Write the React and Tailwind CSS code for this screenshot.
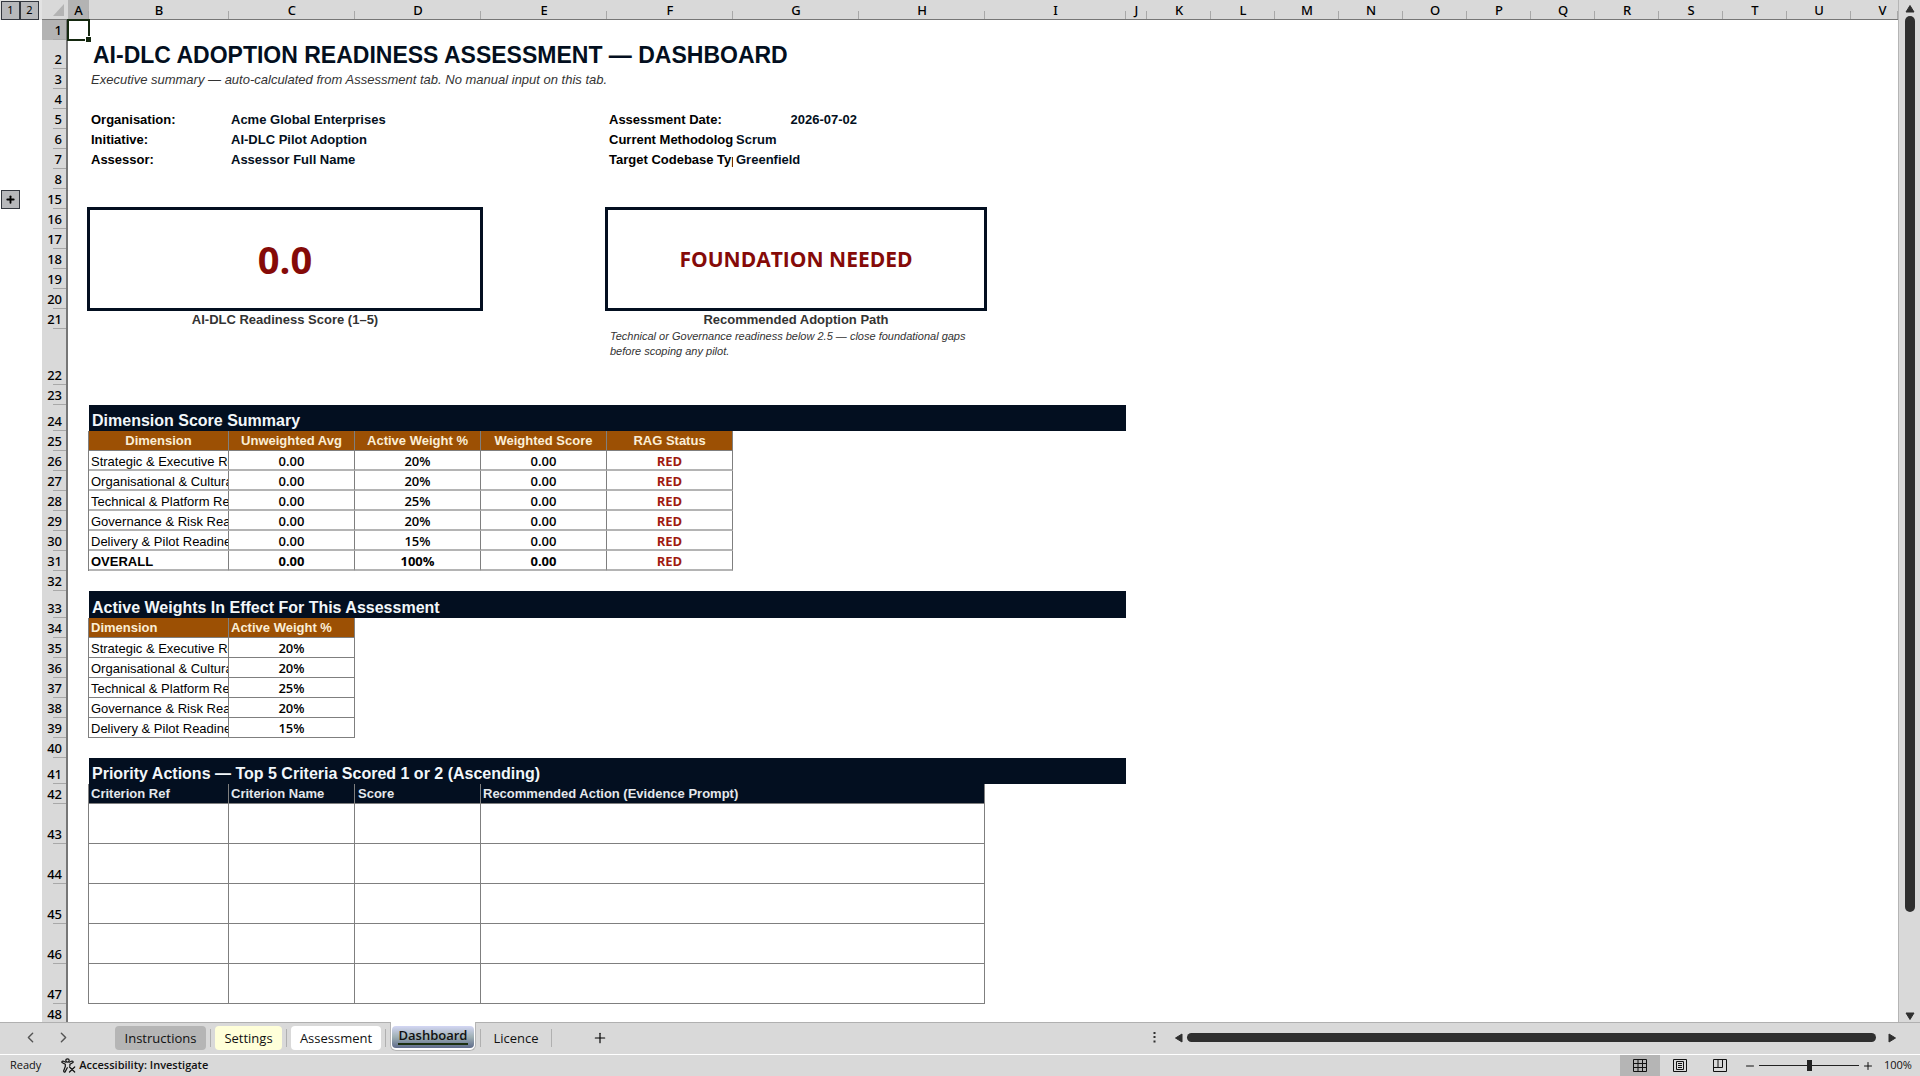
import React, { useState } from "react";
import { ChevronLeft, ChevronRight, Plus, Minus } from "lucide-react";

const COLUMNS = [
  { name: "A", width: "w-[21px]" },
  { name: "B", width: "w-[140px]" },
  { name: "C", width: "w-[126px]" },
  { name: "D", width: "w-[126px]" },
  { name: "E", width: "w-[126px]" },
  { name: "F", width: "w-[126px]" },
  { name: "G", width: "w-[126px]" },
  { name: "H", width: "w-[126px]" },
  { name: "I", width: "w-[141px]" },
  { name: "J", width: "w-[21px]" },
  { name: "K", width: "w-16" },
  { name: "L", width: "w-16" },
  { name: "M", width: "w-16" },
  { name: "N", width: "w-16" },
  { name: "O", width: "w-16" },
  { name: "P", width: "w-16" },
  { name: "Q", width: "w-16" },
  { name: "R", width: "w-16" },
  { name: "S", width: "w-16" },
  { name: "T", width: "w-16" },
  { name: "U", width: "w-16" },
  { name: "V", width: "" },
];

const DIMENSIONS = [
  { name: "Strategic & Executive Readiness", weight: "20%" },
  { name: "Organisational & Cultural Readiness", weight: "20%" },
  { name: "Technical & Platform Readiness", weight: "25%" },
  { name: "Governance & Risk Readiness", weight: "20%" },
  { name: "Delivery & Pilot Readiness", weight: "15%" },
];

const DETAILS = [
  ["Organisation:", "Acme Global Enterprises", "Assessment Date:", "2026-07-02"],
  ["Initiative:", "AI-DLC Pilot Adoption", "Current Methodology:", "Scrum"],
  ["Assessor:", "Assessor Full Name", "Target Codebase Type:", "Greenfield"],
];

const TABS = [
  { name: "Instructions", style: "w-[91px] bg-[#b5b5b5]" },
  { name: "Settings", style: "w-[67px] bg-[#ffffd9]" },
  { name: "Assessment", style: "w-[90px] bg-white" },
  { name: "Dashboard", style: "w-[86px]" },
  { name: "Licence", style: "w-[62px]" },
];

const Row = ({ n, height = "h-5", selected, gutter, children }) => (
  <tr className={height}>
    <td className="bg-white p-0">{gutter}</td>
    <th
      scope="row"
      className={`border-r-2 border-[#767676] p-0 pr-1 text-right align-bottom font-['Noto_Sans',sans-serif] text-[13px] font-medium leading-5 bg-[linear-gradient(#a8a8a8,#a8a8a8)] bg-[length:13px_1px] bg-right-bottom bg-no-repeat ${
        selected ? "bg-[#b3b3b3]" : "bg-[#d9d9d9]"
      }`}
    >
      {n}
    </th>
    {children || <td colSpan={22} />}
  </tr>
);

const SectionRow = ({ n, height, title }) => (
  <Row n={n} height={height}>
    <td />
    <td
      colSpan={8}
      className="bg-[#030f20] p-0 pl-[3px] align-bottom text-[16px] font-bold leading-5 text-[#f2f7fa]"
    >
      {title}
    </td>
  </Row>
);

const HeadCell = ({ children, className = "", ...rest }) => (
  <th
    scope="col"
    className={`border-b border-r border-[#7f7f7f] p-0 text-[13px] leading-[18px] ${className}`}
    {...rest}
  >
    {children}
  </th>
);

const Cell = ({ children, thick, className = "", ...rest }) => (
  <td
    className={`overflow-hidden whitespace-nowrap border-r border-r-[#7f7f7f] p-0 align-bottom ${
      thick
        ? "border-b-2 border-b-[#b4b4b4] leading-[15px]"
        : "border-b border-b-[#7f7f7f] leading-[17px]"
    } ${className}`}
    {...rest}
  >
    {children}
  </td>
);

// numbers and status use a different face from the labels
const ValueCell = ({ children, className = "font-semibold", thick }) => (
  <Cell thick={thick} className={`text-center font-['Open_Sans',sans-serif] ${className}`}>
    {children}
  </Cell>
);

const OutlineButton = ({ label, children }) => (
  <button
    aria-label={label}
    className="flex h-[19px] w-[19px] items-center justify-center border border-[#33373f] bg-[#b7b8bb] font-['Noto_Sans',sans-serif] text-[11px] leading-4"
  >
    {children}
  </button>
);

const Sheet = () => (
  <table className="w-full table-fixed border-separate border-spacing-0 text-[13px] text-black">
    <colgroup>
      <col className="w-[42px]" />
      <col className="w-[26px]" />
      {COLUMNS.map((column) => (
        <col key={column.name} className={column.width} />
      ))}
    </colgroup>
    <thead>
      <tr className="h-5">
        <td className="bg-[#e3e3e3] p-0 pl-px">
          <div className="flex">
            <OutlineButton label="Outline level 1">1</OutlineButton>
            <OutlineButton label="Outline level 2">2</OutlineButton>
          </div>
        </td>
        <td className="border-b border-[#767676] bg-[#d9d9d9] p-0">
          <svg viewBox="0 0 25 19" className="block h-[19px] w-[25px]">
            <path d="M22 4v12H11z" fill="#b3b3b3" />
          </svg>
        </td>
        {COLUMNS.map((column) => (
          <th
            key={column.name}
            scope="col"
            className={`overflow-hidden border-b border-[#767676] p-0 pt-px text-center font-['Noto_Sans',sans-serif] text-[13px] font-medium leading-[18px] bg-[linear-gradient(#a8a8a8,#a8a8a8)] bg-[length:1px_8px] bg-right-bottom bg-no-repeat ${
              column.name === "A" ? "bg-[#b3b3b3]" : "bg-[#d9d9d9]"
            } ${column.name === "V" ? "pl-4" : ""}`}
          >
            {column.name}
          </th>
        ))}
      </tr>
    </thead>
    <tbody>
      <Row n={1} selected>
        <td className="relative p-0 outline-2 -outline-offset-1 outline-[#14280f]">
          <span className="absolute -bottom-0.5 -right-0.5 size-[6px] border-l border-t border-white bg-[#14280f]" />
        </td>
        <td colSpan={21} />
      </Row>
      <Row n={2} height="h-[29px]">
        <td />
        <td
          colSpan={10}
          className="p-0 pl-1 pt-0.5 text-[23px] font-bold leading-[27px] text-[#030f20]"
        >
          AI-DLC ADOPTION READINESS ASSESSMENT — DASHBOARD
        </td>
      </Row>
      <Row n={3}>
        <td />
        <td colSpan={10} className="p-0 pl-0.5 pt-0.5 italic leading-[18px] text-[#333333]">
          Executive summary — auto-calculated from Assessment tab. No manual input on this tab.
        </td>
      </Row>
      <Row n={4} />
      {DETAILS.map(([label, value, label2, value2], i) => (
        <Row key={label} n={5 + i}>
          <td />
          <td className="p-0 pl-0.5 pt-0.5 font-bold leading-[18px]">{label}</td>
          <td colSpan={3} className="p-0 pl-0.5 pt-0.5 font-bold leading-[18px] text-[#030f20]">
            {value}
          </td>
          <td className="overflow-hidden whitespace-nowrap p-0 pl-0.5 pt-0.5 font-bold leading-[18px]">
            {label2}
          </td>
          <td
            className={`p-0 pt-0.5 font-bold leading-[18px] text-[#030f20] ${
              i === 0 ? "pr-0.5 text-right" : "pl-[3px]"
            }`}
          >
            {value2}
          </td>
        </Row>
      ))}
      <Row n={8} />
      <Row
        n={15}
        gutter={
          <div className="pl-px">
            <OutlineButton label="Expand rows">
              <Plus size={11} strokeWidth={4} />
            </OutlineButton>
          </div>
        }
      />
      <Row n={16}>
        <td />
        <td
          colSpan={3}
          rowSpan={5}
          className="p-0 text-center font-['Open_Sans',sans-serif] text-[38px] font-bold leading-none text-[#850a08] outline-3 -outline-offset-1 outline-[#030f20]"
        >
          0.0
        </td>
        <td />
        <td
          colSpan={3}
          rowSpan={5}
          className="p-0 text-center font-['Open_Sans',sans-serif] text-[21px] font-bold leading-none text-[#850a08] outline-3 -outline-offset-1 outline-[#030f20]"
        >
          FOUNDATION NEEDED
        </td>
      </Row>
      <Row n={17}><td /></Row>
      <Row n={18}><td /></Row>
      <Row n={19}><td /></Row>
      <Row n={20}><td /></Row>
      <Row n={21}>
        <td />
        <td colSpan={3} className="p-0 pt-0.5 text-center font-bold leading-[18px] text-[#333333]">
          AI-DLC Readiness Score (1–5)
        </td>
        <td />
        <td colSpan={3} className="p-0 pt-0.5 text-center font-bold leading-[18px] text-[#333333]">
          Recommended Adoption Path
        </td>
      </Row>
      <Row n={22} height="h-14">
        <td colSpan={5} />
        <td
          colSpan={3}
          className="p-0 pl-[3px] align-top text-[11px] italic leading-[15px] text-[#333333]"
        >
          Technical or Governance readiness below 2.5 — close foundational gaps before scoping any
          pilot.
        </td>
      </Row>
      <Row n={23} />

      <SectionRow n={24} height="h-[26px]" title="Dimension Score Summary" />
      <Row n={25}>
        <td className="border-r border-[#7f7f7f]" />
        {["Dimension", "Unweighted Avg", "Active Weight %", "Weighted Score", "RAG Status"].map(
          (head) => (
            <HeadCell key={head} className="bg-[#9c5004] text-center text-[#fbeed6]">
              {head}
            </HeadCell>
          )
        )}
      </Row>
      {[...DIMENSIONS, { name: "OVERALL", weight: "100%", total: true }].map((dimension, i) => {
        const weight = dimension.total ? "font-bold" : "font-semibold";
        return (
          <Row key={dimension.name} n={26 + i}>
            <td className="border-r border-[#7f7f7f]" />
            <Cell thick className={`pl-0.5 ${dimension.total ? "font-bold" : ""}`}>
              {dimension.name}
            </Cell>
            <ValueCell thick className={weight}>0.00</ValueCell>
            <ValueCell thick className={weight}>{dimension.weight}</ValueCell>
            <ValueCell thick className={weight}>0.00</ValueCell>
            <ValueCell thick className="font-bold text-[#a01a10]">RED</ValueCell>
          </Row>
        );
      })}
      <Row n={32} />

      <SectionRow n={33} height="h-[27px]" title="Active Weights In Effect For This Assessment" />
      <Row n={34}>
        <td className="border-r border-[#7f7f7f]" />
        <HeadCell className="bg-[#9c5004] pl-0.5 text-left text-[#fbeed6]">Dimension</HeadCell>
        <HeadCell className="bg-[#9c5004] pl-0.5 text-left text-[#fbeed6]">
          Active Weight %
        </HeadCell>
      </Row>
      {DIMENSIONS.map((dimension, i) => (
        <Row key={dimension.name} n={35 + i}>
          <td className="border-r border-[#7f7f7f]" />
          <Cell className="pl-0.5">{dimension.name}</Cell>
          <ValueCell>{dimension.weight}</ValueCell>
        </Row>
      ))}
      <Row n={40} />

      <SectionRow
        n={41}
        height="h-[26px]"
        title="Priority Actions — Top 5 Criteria Scored 1 or 2 (Ascending)"
      />
      <Row n={42}>
        <td className="border-r border-[#7f7f7f]" />
        <HeadCell className="bg-[#030f20] pl-0.5 text-left text-[#e4e8ec]">Criterion Ref</HeadCell>
        <HeadCell className="bg-[#030f20] pl-0.5 text-left text-[#e4e8ec]">Criterion Name</HeadCell>
        <HeadCell className="bg-[#030f20] pl-[3px] text-left text-[#e4e8ec]">Score</HeadCell>
        <HeadCell colSpan={4} className="bg-[#030f20] pl-0.5 text-left text-[#e4e8ec]">
          Recommended Action (Evidence Prompt)
        </HeadCell>
      </Row>
      {[43, 44, 45, 46, 47].map((n) => (
        <Row key={n} n={n} height="h-10">
          <td className="border-r border-[#7f7f7f]" />
          <Cell />
          <Cell />
          <Cell />
          <Cell colSpan={4} />
        </Row>
      ))}
      <Row n={48} />
    </tbody>
  </table>
);

const VerticalScroll = () => (
  <div className="flex w-[22px] shrink-0 flex-col items-center border-l border-[#b5b5b5] bg-[#d9d9d9] pb-0.5 pt-[5px]">
    <button aria-label="Scroll up">
      <svg viewBox="0 0 10 8" className="block h-2 w-2.5" fill="#2f2f2f">
        <path d="M5 0.5L9 7H1z" stroke="#2f2f2f" strokeLinejoin="round" />
      </svg>
    </button>
    <div className="mt-[3px] flex w-2.5 grow flex-col">
      <div className="h-[90%] rounded-full bg-[#2f2f2f]" />
    </div>
    <button aria-label="Scroll down">
      <svg viewBox="0 0 10 8" className="block h-2 w-2.5" fill="#2f2f2f">
        <path d="M5 7.5L1 1h8z" stroke="#2f2f2f" strokeLinejoin="round" />
      </svg>
    </button>
  </div>
);

const SheetTabs = () => {
  const [active, setActive] = useState("Dashboard");

  return (
    <div className="flex h-8 shrink-0 items-center border-t border-[#b0b0b0] bg-[#d9d9d9] pb-0.5 font-['Open_Sans',sans-serif] text-[13px]">
      <button aria-label="Previous sheet" className="ml-[22px] text-[#555555]">
        <ChevronLeft size={17} strokeWidth={2} />
      </button>
      <button aria-label="Next sheet" className="ml-4 text-[#555555]">
        <ChevronRight size={17} strokeWidth={2} />
      </button>
      <nav className="ml-[43px] flex h-full items-center">
        {TABS.map((tab) => (
          <React.Fragment key={tab.name}>
            {tab.name === active ? (
              <button
                onClick={() => setActive(tab.name)}
                className="-mt-px h-[29px] w-[86px] self-start rounded-b-md border-x border-b border-[#b5b5b5] bg-white px-px pb-0.5 pt-1"
              >
                <span className="flex h-full w-full justify-center rounded-sm bg-linear-to-b from-[#d3d6f4] via-[#9fb0b4] to-[#5f6b8a] px-[6px]">
                  <span className="mb-[3px] w-full border-b-2 border-[#1d3010] font-semibold leading-[18px] text-[#111111]">
                    {tab.name}
                  </span>
                </span>
              </button>
            ) : (
              <button
                onClick={() => setActive(tab.name)}
                className={`h-6 rounded text-center leading-6 text-[#111111] ${tab.style}`}
              >
                {tab.name}
              </button>
            )}
            <span className="mx-1 h-[18px] w-px bg-[#b0b0b0]" />
          </React.Fragment>
        ))}
      </nav>
      <button aria-label="New sheet" className="ml-9">
        <Plus size={16} strokeWidth={1.75} />
      </button>
      <div className="grow" />
      <div className="flex w-[767px] items-center pr-6">
        <svg viewBox="0 0 3 11" className="mr-[19px] h-[11px] w-[3px]" fill="#2f2f2f">
          <path d="M0.5 0h2v2h-2zM0.5 4h2v2h-2zM0.5 8.5h2v2h-2z" />
        </svg>
        <button aria-label="Scroll left">
          <svg viewBox="0 0 8 10" className="block h-2.5 w-2" fill="#2f2f2f">
            <path d="M0.5 5L7 1v8z" stroke="#2f2f2f" strokeLinejoin="round" />
          </svg>
        </button>
        <div className="ml-1 mr-3 h-[9px] grow rounded-full bg-[#2f2f2f]" />
        <button aria-label="Scroll right">
          <svg viewBox="0 0 8 10" className="block h-2.5 w-2" fill="#2f2f2f">
            <path d="M7.5 5L1 9V1z" stroke="#2f2f2f" strokeLinejoin="round" />
          </svg>
        </button>
      </div>
    </div>
  );
};

const StatusBar = () => (
  <footer className="flex h-[22px] shrink-0 items-center border-t border-white bg-[#d9d9d9] font-['Open_Sans',sans-serif] text-[11px] text-[#111111]">
    <span className="ml-2.5">Ready</span>
    <button className="ml-5 flex items-center gap-[3px] font-semibold">
      <svg
        viewBox="0 0 15 15"
        className="h-[15px] w-[15px]"
        fill="none"
        stroke="#111111"
        strokeWidth="1.2"
        strokeLinecap="round"
        strokeLinejoin="round"
      >
        <circle cx="6.5" cy="2.5" r="1.7" />
        <path d="M4.8 4.2L2 3Q0.4 3.2 1 4.5L4.3 6.3v2.2L2.6 13q0.2 1.4 1.5 0.9l2.2-4.2M8.2 4.2L11 3q1.6 0.2 1 1.5L8.9 6.3v1.4M8.5 9l5.2 5M13.7 9l-5.2 5" />
      </svg>
      Accessibility: Investigate
    </button>
    <div className="grow" />
    <button
      aria-label="Normal view"
      className="flex h-full w-10 items-center justify-center bg-[#b5b5b5]"
    >
      <svg viewBox="0 0 14 13" className="h-[13px] w-3.5" fill="none" stroke="#111111">
        <path d="M0.5 0.5h13v12h-13zM5 0.5v12M9.5 0.5v12M0.5 4.5h13M0.5 8.5h13" />
      </svg>
    </button>
    <button aria-label="Page layout view" className="flex h-full w-10 items-center justify-center">
      <svg viewBox="0 0 14 13" className="h-[13px] w-3.5" fill="none" stroke="#111111">
        <path d="M0.5 0.5h13v12h-13zM3.5 2.5h7v8h-7zM5 4.5h4M5 6.5h4M5 8.5h4" />
      </svg>
    </button>
    <button aria-label="Page break view" className="flex h-full w-10 items-center justify-center">
      <svg viewBox="0 0 14 13" className="h-[13px] w-3.5" fill="none" stroke="#111111">
        <path d="M0.5 0.5h13v12h-13zM0.5 8.5h9v-8M5 0.5v8" />
      </svg>
    </button>
    <button aria-label="Zoom out" className="ml-1">
      <Minus size={12} />
    </button>
    <input
      type="range"
      aria-label="Zoom"
      min="10"
      max="190"
      defaultValue="100"
      className="mx-[3px] h-3 w-[100px] appearance-none bg-[linear-gradient(#222,#222)] bg-[length:100%_1px] bg-center bg-no-repeat [&::-webkit-slider-thumb]:h-[11px] [&::-webkit-slider-thumb]:w-[5px] [&::-webkit-slider-thumb]:appearance-none [&::-webkit-slider-thumb]:bg-[#222222]"
    />
    <button aria-label="Zoom in">
      <Plus size={12} />
    </button>
    <span className="ml-2.5 w-9">100%</span>
  </footer>
);

const App = () => (
  <div className="flex h-screen flex-col overflow-hidden bg-white font-['Liberation_Sans',Arial,sans-serif]">
    <div className="flex min-h-0 grow">
      <main className="min-w-0 grow overflow-hidden">
        <Sheet />
      </main>
      <VerticalScroll />
    </div>
    <SheetTabs />
    <StatusBar />
  </div>
);

export default App;
